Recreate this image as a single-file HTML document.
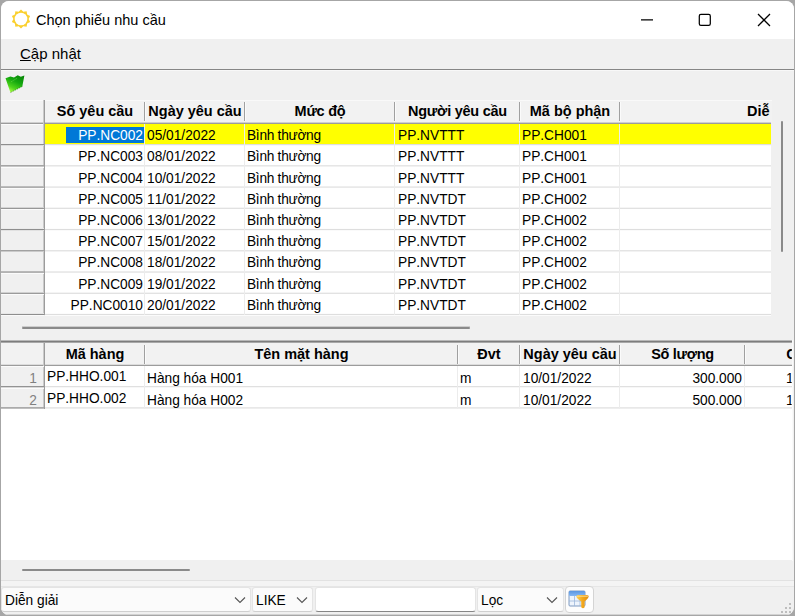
<!DOCTYPE html>
<html lang="vi"><head><meta charset="utf-8"><title>Chọn phiếu nhu cầu</title>
<style>
html,body{margin:0;padding:0}
body{width:795px;height:616px;overflow:hidden;background:#a6a6a6;position:relative;font-family:"Liberation Sans",sans-serif;color:#000}
#win{position:absolute;left:1px;top:1px;width:793px;height:614px;background:#f0f0f0;border-radius:8px;overflow:hidden}
#win div,#win span{position:absolute;white-space:nowrap}
.t{font-size:14.6px;line-height:16px;height:16px;font-kerning:none;transform:scaleX(0.94);transform-origin:0 0}
.h{font-size:15.4px;line-height:16px;height:16px;font-weight:bold;text-align:center;font-kerning:none;transform:scaleX(0.94);transform-origin:50% 0}
.r{text-align:right;transform-origin:100% 0}
.ui{font-size:15px;line-height:18px}
</style></head><body>
<div id="win">
<div style="left:0px;top:0px;width:793px;height:38px;background:#fff;"></div>
<svg style="position:absolute;left:9px;top:7px" width="22" height="22" viewBox="-11 -11 22 22">
<g fill="#fad030"><polygon points="0.00,-9.60 2.35,-7.23 5.64,-7.77 6.15,-4.47 9.13,-2.97 7.60,0.00 9.13,2.97 6.15,4.47 5.64,7.77 2.35,7.23 0.00,9.60 -2.35,7.23 -5.64,7.77 -6.15,4.47 -9.13,2.97 -7.60,0.00 -9.13,-2.97 -6.15,-4.47 -5.64,-7.77 -2.35,-7.23"/></g><circle r="6.3" fill="#fff"/></svg>
<div class="ui" style="left:35px;top:8.5px;font-size:14.5px;line-height:20px">Chọn phiếu nhu cầu</div>
<svg style="position:absolute;left:620px;top:0" width="173" height="38" viewBox="621 1 173 38" fill="none" stroke="#000" stroke-width="1.25">
<path d="M641 19.8H653"/>
<rect x="699.3" y="14.3" width="11" height="11" rx="1.6"/>
<path d="M758 14L770 26M770 14L758 26"/>
</svg>
<div class="ui" style="left:19px;top:43px;font-size:15px;line-height:20px"><span style="position:static;text-decoration:underline">C</span>ập nhật</div>
<div style="left:0px;top:68px;width:793px;height:1px;background:#868686;"></div>
<div style="left:0px;top:69px;width:793px;height:1px;background:#f8f8f8;"></div>
<svg style="position:absolute;left:3px;top:72px" width="24" height="22" viewBox="4 73 24 22">
<defs><linearGradient id="fg" x1="0.85" y1="0" x2="0.3" y2="1"><stop offset="0" stop-color="#078507"/><stop offset="0.4" stop-color="#14a80e"/><stop offset="0.75" stop-color="#4fd51c"/><stop offset="1" stop-color="#b0ff48"/></linearGradient></defs>
<polygon points="5.5,78.3 10.4,76.6 14,77.6 17.7,75.3 20.8,76.8 24.4,75.5 22.3,86.4 10.4,92.6" fill="url(#fg)"/><path d="M22.3 86.4L10.4 92.6" stroke="#2a7a1a" stroke-width="0.7" stroke-dasharray="1.2 1.2" fill="none"/><path d="M11.5 81.5L16.5 78.6" stroke="#8fe86a" stroke-width="0.7" stroke-dasharray="1 1.4" fill="none"/>
</svg>
<div style="left:0px;top:99px;width:771px;height:23px;background:#f2f2f2;"></div>
<div style="left:0px;top:99px;width:771px;height:1px;background:#f9f9f9;"></div>
<div style="left:44px;top:122px;width:726px;height:192px;background:#fff;"></div>
<div style="left:44px;top:123px;width:726px;height:20px;background:#ffff00;"></div>
<div style="left:65px;top:126px;width:78px;height:16px;background:#0078d7;"></div>
<div style="left:44px;top:143px;width:726px;height:1px;background:#dedede;"></div>
<div style="left:44px;top:144px;width:726px;height:1px;background:#f9f9f9;"></div>
<div style="left:44px;top:164px;width:726px;height:1px;background:#e6e6e6;"></div>
<div style="left:44px;top:165px;width:726px;height:1px;background:#f1f1f1;"></div>
<div style="left:44px;top:185px;width:726px;height:1px;background:#eeeeee;"></div>
<div style="left:44px;top:186px;width:726px;height:1px;background:#e9e9e9;"></div>
<div style="left:44px;top:206px;width:726px;height:1px;background:#f5f5f5;"></div>
<div style="left:44px;top:207px;width:726px;height:1px;background:#e1e1e1;"></div>
<div style="left:44px;top:227px;width:726px;height:1px;background:#fdfdfd;"></div>
<div style="left:44px;top:228px;width:726px;height:1px;background:#dedede;"></div>
<div style="left:44px;top:229px;width:726px;height:1px;background:#fafafa;"></div>
<div style="left:44px;top:249px;width:726px;height:1px;background:#e4e4e4;"></div>
<div style="left:44px;top:250px;width:726px;height:1px;background:#f2f2f2;"></div>
<div style="left:44px;top:270px;width:726px;height:1px;background:#ececec;"></div>
<div style="left:44px;top:271px;width:726px;height:1px;background:#eaeaea;"></div>
<div style="left:44px;top:291px;width:726px;height:1px;background:#f4f4f4;"></div>
<div style="left:44px;top:292px;width:726px;height:1px;background:#e2e2e2;"></div>
<div style="left:44px;top:312px;width:726px;height:1px;background:#fcfcfc;"></div>
<div style="left:44px;top:313px;width:726px;height:1px;background:#dedede;"></div>
<div style="left:44px;top:314px;width:726px;height:1px;background:#fbfbfb;"></div>
<div style="left:143px;top:122px;width:1px;height:192px;background:#ececec;"></div>
<div style="left:243px;top:122px;width:1px;height:192px;background:#ececec;"></div>
<div style="left:393px;top:122px;width:1px;height:192px;background:#ececec;"></div>
<div style="left:518px;top:122px;width:1px;height:192px;background:#ececec;"></div>
<div style="left:618px;top:122px;width:1px;height:192px;background:#ececec;"></div>
<div style="left:0px;top:121px;width:770px;height:1px;background:#cfcfcf;"></div>
<div style="left:0px;top:122px;width:770px;height:1px;background:#9c9c9c;"></div>
<div style="left:0px;top:123px;width:43px;height:1px;background:#fbfbfb;"></div>
<div style="left:42px;top:99px;width:1px;height:215px;background:#cacaca;"></div>
<div style="left:43px;top:99px;width:1px;height:215px;background:#9c9c9c;"></div>
<div style="left:0px;top:144px;width:43px;height:1px;background:#fbfbfb;"></div>
<div style="left:0px;top:143px;width:43px;height:1px;background:#8e8e8e;"></div>
<div style="left:0px;top:144px;width:43px;height:1px;background:#dddddd;"></div>
<div style="left:0px;top:166px;width:43px;height:1px;background:#fbfbfb;"></div>
<div style="left:0px;top:164px;width:43px;height:1px;background:#a5a5a5;"></div>
<div style="left:0px;top:165px;width:43px;height:1px;background:#c6c6c6;"></div>
<div style="left:0px;top:187px;width:43px;height:1px;background:#fbfbfb;"></div>
<div style="left:0px;top:185px;width:43px;height:1px;background:#bcbcbc;"></div>
<div style="left:0px;top:186px;width:43px;height:1px;background:#aeaeae;"></div>
<div style="left:0px;top:208px;width:43px;height:1px;background:#fbfbfb;"></div>
<div style="left:0px;top:206px;width:43px;height:1px;background:#d4d4d4;"></div>
<div style="left:0px;top:207px;width:43px;height:1px;background:#979797;"></div>
<div style="left:0px;top:229px;width:43px;height:1px;background:#fbfbfb;"></div>
<div style="left:0px;top:227px;width:43px;height:1px;background:#ebebeb;"></div>
<div style="left:0px;top:228px;width:43px;height:1px;background:#8e8e8e;"></div>
<div style="left:0px;top:229px;width:43px;height:1px;background:#e1e1e1;"></div>
<div style="left:0px;top:250px;width:43px;height:1px;background:#fbfbfb;"></div>
<div style="left:0px;top:249px;width:43px;height:1px;background:#a1a1a1;"></div>
<div style="left:0px;top:250px;width:43px;height:1px;background:#cacaca;"></div>
<div style="left:0px;top:272px;width:43px;height:1px;background:#fbfbfb;"></div>
<div style="left:0px;top:270px;width:43px;height:1px;background:#b8b8b8;"></div>
<div style="left:0px;top:271px;width:43px;height:1px;background:#b2b2b2;"></div>
<div style="left:0px;top:293px;width:43px;height:1px;background:#fbfbfb;"></div>
<div style="left:0px;top:291px;width:43px;height:1px;background:#d0d0d0;"></div>
<div style="left:0px;top:292px;width:43px;height:1px;background:#9b9b9b;"></div>
<div style="left:0px;top:312px;width:43px;height:1px;background:#e7e7e7;"></div>
<div style="left:0px;top:313px;width:43px;height:1px;background:#8e8e8e;"></div>
<div style="left:0px;top:314px;width:43px;height:1px;background:#e5e5e5;"></div>
<div style="left:143px;top:101px;width:1px;height:19px;background:#a0a0a0;"></div>
<div style="left:144px;top:101px;width:1px;height:19px;background:#fbfbfb;"></div>
<div style="left:243px;top:101px;width:1px;height:19px;background:#a0a0a0;"></div>
<div style="left:244px;top:101px;width:1px;height:19px;background:#fbfbfb;"></div>
<div style="left:393px;top:101px;width:1px;height:19px;background:#a0a0a0;"></div>
<div style="left:394px;top:101px;width:1px;height:19px;background:#fbfbfb;"></div>
<div style="left:518px;top:101px;width:1px;height:19px;background:#a0a0a0;"></div>
<div style="left:519px;top:101px;width:1px;height:19px;background:#fbfbfb;"></div>
<div style="left:618px;top:101px;width:1px;height:19px;background:#a0a0a0;"></div>
<div style="left:619px;top:101px;width:1px;height:19px;background:#fbfbfb;"></div>
<div class="h" style="left:44px;top:102px;width:100px;">Số yêu cầu</div>
<div class="h" style="left:144px;top:102px;width:100px;">Ngày yêu cầu</div>
<div class="h" style="left:244px;top:102px;width:150px;letter-spacing:-0.25px">Mức độ</div>
<div class="h" style="left:394px;top:102px;width:125px;letter-spacing:-0.25px">Người yêu cầu</div>
<div class="h" style="left:519px;top:102px;width:100px;">Mã bộ phận</div>
<div style="left:619px;top:100px;width:150px;height:22px;overflow:hidden"><div class="h" style="left:127px;top:2px;text-align:left;transform-origin:0 0">Diễn giải</div></div>
<div class="t r" style="left:44px;top:126px;width:98px;color:#fff;">PP.NC002</div>
<div class="t" style="left:146px;top:126px;">05/01/2022</div>
<div class="t" style="left:246px;top:126px;letter-spacing:-0.3px">Bình thường</div>
<div class="t" style="left:396.5px;top:126px;">PP.NVTTT</div>
<div class="t" style="left:521px;top:126px;">PP.CH001</div>
<div class="t r" style="left:44px;top:147px;width:98px;">PP.NC003</div>
<div class="t" style="left:146px;top:147px;">08/01/2022</div>
<div class="t" style="left:246px;top:147px;letter-spacing:-0.3px">Bình thường</div>
<div class="t" style="left:396.5px;top:147px;">PP.NVTTT</div>
<div class="t" style="left:521px;top:147px;">PP.CH001</div>
<div class="t r" style="left:44px;top:169px;width:98px;">PP.NC004</div>
<div class="t" style="left:146px;top:169px;">10/01/2022</div>
<div class="t" style="left:246px;top:169px;letter-spacing:-0.3px">Bình thường</div>
<div class="t" style="left:396.5px;top:169px;">PP.NVTTT</div>
<div class="t" style="left:521px;top:169px;">PP.CH001</div>
<div class="t r" style="left:44px;top:190px;width:98px;">PP.NC005</div>
<div class="t" style="left:146px;top:190px;">11/01/2022</div>
<div class="t" style="left:246px;top:190px;letter-spacing:-0.3px">Bình thường</div>
<div class="t" style="left:396.5px;top:190px;">PP.NVTDT</div>
<div class="t" style="left:521px;top:190px;">PP.CH002</div>
<div class="t r" style="left:44px;top:211px;width:98px;">PP.NC006</div>
<div class="t" style="left:146px;top:211px;">13/01/2022</div>
<div class="t" style="left:246px;top:211px;letter-spacing:-0.3px">Bình thường</div>
<div class="t" style="left:396.5px;top:211px;">PP.NVTDT</div>
<div class="t" style="left:521px;top:211px;">PP.CH002</div>
<div class="t r" style="left:44px;top:232px;width:98px;">PP.NC007</div>
<div class="t" style="left:146px;top:232px;">15/01/2022</div>
<div class="t" style="left:246px;top:232px;letter-spacing:-0.3px">Bình thường</div>
<div class="t" style="left:396.5px;top:232px;">PP.NVTDT</div>
<div class="t" style="left:521px;top:232px;">PP.CH002</div>
<div class="t r" style="left:44px;top:253px;width:98px;">PP.NC008</div>
<div class="t" style="left:146px;top:253px;">18/01/2022</div>
<div class="t" style="left:246px;top:253px;letter-spacing:-0.3px">Bình thường</div>
<div class="t" style="left:396.5px;top:253px;">PP.NVTDT</div>
<div class="t" style="left:521px;top:253px;">PP.CH002</div>
<div class="t r" style="left:44px;top:275px;width:98px;">PP.NC009</div>
<div class="t" style="left:146px;top:275px;">19/01/2022</div>
<div class="t" style="left:246px;top:275px;letter-spacing:-0.3px">Bình thường</div>
<div class="t" style="left:396.5px;top:275px;">PP.NVTDT</div>
<div class="t" style="left:521px;top:275px;">PP.CH002</div>
<div class="t r" style="left:44px;top:296px;width:98px;">PP.NC0010</div>
<div class="t" style="left:146px;top:296px;">20/01/2022</div>
<div class="t" style="left:246px;top:296px;letter-spacing:-0.3px">Bình thường</div>
<div class="t" style="left:396.5px;top:296px;">PP.NVTDT</div>
<div class="t" style="left:521px;top:296px;">PP.CH002</div>
<div style="left:780px;top:120px;width:2px;height:131px;background:#8a8a8a;border-radius:1px"></div>
<div style="left:21px;top:325px;width:448px;height:1px;background:#cdcdcd;"></div>
<div style="left:21px;top:326px;width:448px;height:2px;background:#8a8a8a;border-radius:1px"></div>
<div style="left:0px;top:314px;width:43px;height:1px;background:#fafafa;"></div>
<div style="left:0px;top:339px;width:791px;height:1px;background:#b8b8b8;"></div>
<div style="left:0px;top:340px;width:791px;height:1px;background:#7d7d7d;"></div>
<div style="left:0px;top:341px;width:791px;height:1px;background:#a8a8a8;"></div>
<div style="left:0px;top:342px;width:791px;height:23px;background:#f2f2f2;"></div>
<div style="left:44px;top:365px;width:747px;height:194px;background:#fff;"></div>
<div style="left:44px;top:385px;width:747px;height:1px;background:#e0e0e0;"></div>
<div style="left:44px;top:386px;width:747px;height:1px;background:#f7f7f7;"></div>
<div style="left:44px;top:406px;width:747px;height:1px;background:#e8e8e8;"></div>
<div style="left:44px;top:407px;width:747px;height:1px;background:#eeeeee;"></div>
<div style="left:143px;top:365px;width:1px;height:43px;background:#ececec;"></div>
<div style="left:456px;top:365px;width:1px;height:43px;background:#ececec;"></div>
<div style="left:518px;top:365px;width:1px;height:43px;background:#ececec;"></div>
<div style="left:618px;top:365px;width:1px;height:43px;background:#ececec;"></div>
<div style="left:743px;top:365px;width:1px;height:43px;background:#ececec;"></div>
<div style="left:0px;top:363px;width:791px;height:1px;background:#dcdcdc;"></div>
<div style="left:0px;top:364px;width:791px;height:1px;background:#9c9c9c;"></div>
<div style="left:0px;top:408px;width:44px;height:151px;background:#fff;"></div>
<div style="left:42px;top:342px;width:1px;height:66px;background:#cacaca;"></div>
<div style="left:43px;top:342px;width:1px;height:66px;background:#9c9c9c;"></div>
<div style="left:0px;top:365px;width:43px;height:1px;background:#fbfbfb;"></div>
<div style="left:0px;top:387px;width:43px;height:1px;background:#fbfbfb;"></div>
<div style="left:0px;top:385px;width:43px;height:1px;background:#939393;"></div>
<div style="left:0px;top:386px;width:43px;height:1px;background:#d8d8d8;"></div>
<div style="left:0px;top:406px;width:43px;height:1px;background:#ababab;"></div>
<div style="left:0px;top:407px;width:43px;height:1px;background:#bfbfbf;"></div>
<div style="left:143px;top:344px;width:1px;height:19px;background:#a0a0a0;"></div>
<div style="left:144px;top:344px;width:1px;height:19px;background:#fbfbfb;"></div>
<div style="left:456px;top:344px;width:1px;height:19px;background:#a0a0a0;"></div>
<div style="left:457px;top:344px;width:1px;height:19px;background:#fbfbfb;"></div>
<div style="left:518px;top:344px;width:1px;height:19px;background:#a0a0a0;"></div>
<div style="left:519px;top:344px;width:1px;height:19px;background:#fbfbfb;"></div>
<div style="left:618px;top:344px;width:1px;height:19px;background:#a0a0a0;"></div>
<div style="left:619px;top:344px;width:1px;height:19px;background:#fbfbfb;"></div>
<div style="left:743px;top:344px;width:1px;height:19px;background:#a0a0a0;"></div>
<div style="left:744px;top:344px;width:1px;height:19px;background:#fbfbfb;"></div>
<div class="h" style="left:44px;top:345px;width:100px;">Mã hàng</div>
<div class="h" style="left:144px;top:345px;width:313px;">Tên mặt hàng</div>
<div class="h" style="left:457px;top:345px;width:62px;">Đvt</div>
<div class="h" style="left:519px;top:345px;width:100px;">Ngày yêu cầu</div>
<div class="h" style="left:619px;top:345px;width:125px;letter-spacing:-0.3px">Số lượng</div>
<div class="h" style="left:785px;top:345px;width:6px;text-align:left;overflow:hidden">C</div>
<div class="t r" style="left:0px;top:369px;width:36px;color:#808080">1</div>
<div class="t" style="left:46px;top:367px;">PP.HHO.001</div>
<div class="t" style="left:146px;top:369px;">Hàng hóa H001</div>
<div class="t" style="left:458.5px;top:369px;">m</div>
<div class="t" style="left:522px;top:369px;">10/01/2022</div>
<div class="t r" style="left:644px;top:369px;width:97px;">300.000</div>
<div class="t" style="left:785px;top:369px;width:6px;overflow:hidden">1</div>
<div class="t r" style="left:0px;top:391px;width:36px;color:#808080">2</div>
<div class="t" style="left:46px;top:389px;">PP.HHO.002</div>
<div class="t" style="left:146px;top:391px;">Hàng hóa H002</div>
<div class="t" style="left:458.5px;top:391px;">m</div>
<div class="t" style="left:522px;top:391px;">10/01/2022</div>
<div class="t r" style="left:644px;top:391px;width:97px;">500.000</div>
<div class="t" style="left:785px;top:391px;width:6px;overflow:hidden">1</div>
<div style="left:791px;top:339px;width:1px;height:221px;background:#fafafa;"></div>
<div style="left:21px;top:568px;width:168px;height:2px;background:#8a8a8a;border-radius:1px"></div>
<div style="left:0px;top:579px;width:793px;height:1px;background:#e2e2e2;"></div>
<div style="left:0px;top:580px;width:793px;height:5px;background:#f4f4f4;"></div>
<div style="left:0px;top:585px;width:793px;height:1px;background:#e6e6e6;"></div>
<div style="left:0px;top:586px;width:793px;height:29px;background:#f0f0f0;"></div>
<div style="left:0px;top:613px;width:793px;height:1px;background:#d2d2d2;"></div>
<div style="left:0px;top:586px;width:248px;height:22.5px;background:#fbfbfb;border:1px solid #e4e4e4;border-bottom-color:#cfcfcf;border-radius:3px"></div>
<div class="t" style="left:4px;top:591px;">Diễn giải</div>
<svg style="position:absolute;left:233px;top:595px" width="12" height="8" viewBox="0 0 12 8" fill="none" stroke="#555" stroke-width="1.1"><path d="M1 1.5L6 6.5L11 1.5"/></svg>
<div style="left:251px;top:586px;width:59px;height:22.5px;background:#fbfbfb;border:1px solid #e4e4e4;border-bottom-color:#cfcfcf;border-radius:3px"></div>
<div class="t" style="left:255px;top:591px;">LIKE</div>
<svg style="position:absolute;left:295px;top:595px" width="12" height="8" viewBox="0 0 12 8" fill="none" stroke="#555" stroke-width="1.1"><path d="M1 1.5L6 6.5L11 1.5"/></svg>
<div style="left:314px;top:586px;width:159px;height:23px;background:#fff;border:1px solid #e4e4e4;border-bottom:1px solid #868686;border-radius:3px"></div>
<div style="left:476px;top:586px;width:85px;height:22.5px;background:#fbfbfb;border:1px solid #e4e4e4;border-bottom-color:#cfcfcf;border-radius:3px"></div>
<div class="t" style="left:480px;top:591px;">Lọc</div>
<svg style="position:absolute;left:545px;top:595px" width="12" height="8" viewBox="0 0 12 8" fill="none" stroke="#555" stroke-width="1.1"><path d="M1 1.5L6 6.5L11 1.5"/></svg>
<div style="left:564px;top:585px;width:27px;height:25px;background:#fdfdfd;border:1px solid #d4d4d4;border-radius:4px"></div>
<svg style="position:absolute;left:566px;top:588px" width="24" height="22" viewBox="567 589 24 22">
<defs><linearGradient id="bh" x1="0" y1="0" x2="0" y2="1"><stop offset="0" stop-color="#5a96e0"/><stop offset="1" stop-color="#86b8f4"/></linearGradient>
<linearGradient id="fn" x1="0" y1="0" x2="1" y2="0"><stop offset="0" stop-color="#fbd15a"/><stop offset="0.5" stop-color="#f3a81c"/><stop offset="1" stop-color="#e08e10"/></linearGradient></defs>
<rect x="569" y="591" width="16" height="15" rx="1" fill="#eef4fc" stroke="#6f8fba" stroke-width="0.9"/>
<rect x="569" y="591" width="16" height="5" rx="1" fill="url(#bh)"/>
<path d="M569 601H585M574.5 596V606M580 596V606" stroke="#9db7da" stroke-width="0.8"/>
<path d="M576.3 596.6Q576.3 595 578 595H587Q588.8 595 588.7 596.6Q588.4 598.6 584.6 601.6V607.3Q583 609.4 581.2 607.3V601.6Q576.6 598.6 576.3 596.6Z" fill="url(#fn)"/><path d="M577.5 596.2H587.5" stroke="#fde29a" stroke-width="0.9" stroke-linecap="round"/>
</svg>
<div style="left:788px;top:602px;width:2px;height:2px;background:#bdbdbd;"></div>
<div style="left:784px;top:606px;width:2px;height:2px;background:#bdbdbd;"></div>
<div style="left:788px;top:606px;width:2px;height:2px;background:#bdbdbd;"></div>
<div style="left:780px;top:610px;width:2px;height:2px;background:#bdbdbd;"></div>
<div style="left:784px;top:610px;width:2px;height:2px;background:#bdbdbd;"></div>
<div style="left:788px;top:610px;width:2px;height:2px;background:#bdbdbd;"></div>
</div>
</body></html>
